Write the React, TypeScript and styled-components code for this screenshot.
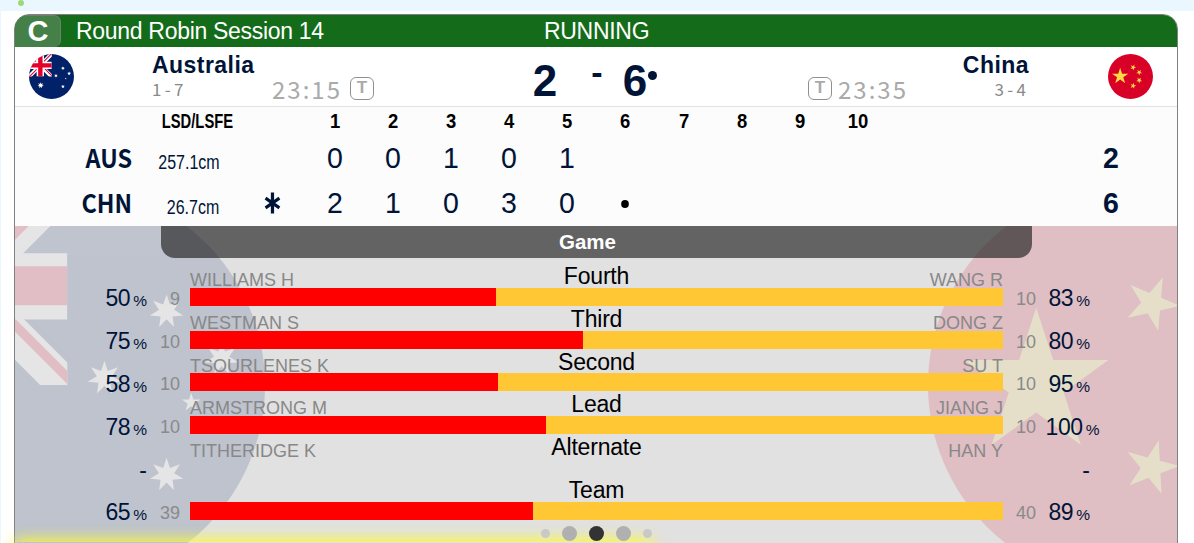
import styled, { createGlobalStyle, css } from 'styled-components';

const GlobalStyle = createGlobalStyle`
  * {
    box-sizing: border-box;
  }
  body {
    margin: 0;
    height: 543px;
    overflow: hidden;
    background: #fff;
    font-family: 'Liberation Sans', Arial, sans-serif;
  }
`;

type StarProps = { cx: number; cy: number; r: number; points?: number; inner?: number; angle?: number };
const Star: React.FC<StarProps & { fill: string }> = ({ cx, cy, r, points = 5, inner = 0.382, angle = -90, fill }) => {
  const coords = Array.from({ length: points * 2 }, (_, i) => {
    const a = ((angle + (i * 180) / points) * Math.PI) / 180;
    const d = i % 2 ? r * inner : r;
    return `${(cx + d * Math.cos(a)).toFixed(1)},${(cy + d * Math.sin(a)).toFixed(1)}`;
  });
  return <polygon points={coords.join(' ')} fill={fill} />;
};

const FlagAus: React.FC<{ id: string }> = ({ id }) => (
  <svg viewBox="0 0 512 512" width="100%" height="100%">
    <clipPath id={`${id}-round`}>
      <circle cx="256" cy="256" r="256" />
    </clipPath>
    <clipPath id={`${id}-canton`}>
      <path d="M0 0h259v256H0z" />
    </clipPath>
    <g clipPath={`url(#${id}-round)`}>
      <path fill="#012169" d="M0 0h512v512H0z" />
      <g clipPath={`url(#${id}-canton)`}>
        <path stroke="#fff" strokeWidth="45" d="M-20-20 280 280M278-20-20 278" />
        <path
          stroke="#e4002b"
          strokeWidth="12"
          d="M129 116.500 280 267.500M129 141.500-20-7.500M124.500 129 273.500-20M133.500 129-20 282.500"
        />
        <path fill="#fff" d="M87 0h84v256H87zM0 87.500h259v84.500H0z" />
        <path fill="#e4002b" d="M104 0h50v256h-50zM0 104h259v50H0z" />
      </g>
      <Star fill="#fff" cx={133} cy={357} r={37} points={7} inner={0.45} />
      <Star fill="#fff" cx={386} cy={162} r={22} points={7} inner={0.45} />
      <Star fill="#fff" cx={306.500} cy={247} r={22} points={7} inner={0.45} />
      <Star fill="#fff" cx={456.500} cy={222} r={22} points={7} inner={0.45} />
      <Star fill="#fff" cx={386} cy={371} r={22} points={7} inner={0.45} />
      <Star fill="#fff" cx={417.500} cy={278.500} r={12.500} />
    </g>
  </svg>
);

const FlagChn: React.FC = () => (
  <svg viewBox="0 0 512 512" width="100%" height="100%">
    <circle cx="256" cy="256" r="256" fill="#d80027" />
    <Star fill="#ffda44" cx={138.500} cy={254} r={97} />
    <Star fill="#ffda44" cx={286.500} cy={151.500} r={36} angle={5} />
    <Star fill="#ffda44" cx={355} cy={209} r={36} angle={162} />
    <Star fill="#ffda44" cx={355} cy={299} r={36} angle={18} />
    <Star fill="#ffda44" cx={286} cy={361.500} r={36} angle={-3} />
  </svg>
);

type Player = { position: string; home: string; away: string; homePct?: number; awayPct?: number; homeN?: number; awayN?: number };
const players: Player[] = [
  { position: 'Fourth', home: 'WILLIAMS H', away: 'WANG R', homePct: 50, awayPct: 83, homeN: 9, awayN: 10 },
  { position: 'Third', home: 'WESTMAN S', away: 'DONG Z', homePct: 75, awayPct: 80, homeN: 10, awayN: 10 },
  { position: 'Second', home: 'TSOURLENES K', away: 'SU T', homePct: 58, awayPct: 95, homeN: 10, awayN: 10 },
  { position: 'Lead', home: 'ARMSTRONG M', away: 'JIANG J', homePct: 78, awayPct: 100, homeN: 10, awayN: 10 },
  { position: 'Alternate', home: 'TITHERIDGE K', away: 'HAN Y' },
  { position: 'Team', home: '', away: '', homePct: 65, awayPct: 89, homeN: 39, awayN: 40 },
];

const ends = [1, 2, 3, 4, 5, 6, 7, 8, 9, 10];
const teams = [
  { code: 'AUS', lsd: '257.1cm', hammer: false, scores: ['0', '0', '1', '0', '1'], total: 2 },
  { code: 'CHN', lsd: '26.7cm', hammer: true, scores: ['2', '1', '0', '3', '0', 'dot'], total: 6 },
];

const Percent: React.FC<{ value?: number }> = ({ value }) =>
  value === undefined ? (
    <NoValue>-</NoValue>
  ) : (
    <>
      {value}
      <PercentSign>%</PercentSign>
    </>
  );

const App: React.FC = () => (
  <>
    <GlobalStyle />
    <TopStrip>
      <StatusDot />
    </TopStrip>

    <Page>
      <Card>
        <CardHeader>
          <Sheet>C</Sheet>
          <Session>Round Robin Session 14</Session>
          <GameState>RUNNING</GameState>
        </CardHeader>

        <Teams>
          <FlagIcon>
            <FlagAus id="small" />
          </FlagIcon>
          <TeamInfo>
            <TeamName>Australia</TeamName>
            <Record>1 - 7</Record>
          </TeamInfo>
          <Clock>
            23:15 <Timeout>T</Timeout>
          </Clock>
          <Score>
            <Points>2</Points>
            <ScoreDash>-</ScoreDash>
            <Points>6</Points>
            <HammerDot />
          </Score>
          <Clock right>
            <Timeout>T</Timeout> 23:35
          </Clock>
          <TeamInfo right>
            <TeamName>China</TeamName>
            <Record right>3 - 4</Record>
          </TeamInfo>
          <FlagIcon>
            <FlagChn />
          </FlagIcon>
        </Teams>

        <ScoreTable>
          <TableHead>
            <span />
            <HeadLsd>
              <span>LSD/LSFE</span>
            </HeadLsd>
            <span />
            {ends.map(end => (
              <HeadEnd key={end}>{end}</HeadEnd>
            ))}
          </TableHead>
          {teams.map(team => (
            <TableRow key={team.code}>
              <Code>{team.code}</Code>
              <Lsd>
                <span>{team.lsd}</span>
              </Lsd>
              <HammerCell>
                {team.hammer && (
                  <svg width="18" height="22" viewBox="0 0 18 22" stroke={navy} strokeWidth="3.400">
                    <path d="M9 .5v21M1.700 6.200l14.600 9.600M16.300 6.200 1.700 15.800" />
                  </svg>
                )}
              </HammerCell>
              {ends.map((end, i) => (
                <Cell key={end}>{team.scores[i] === 'dot' ? <EndDot /> : team.scores[i]}</Cell>
              ))}
              <Total>{team.total}</Total>
            </TableRow>
          ))}
        </ScoreTable>

        <Stats>
          <BackFlag side="left">
            <FlagAus id="large" />
          </BackFlag>
          <BackFlag side="right">
            <FlagChn />
          </BackFlag>
          <StatsTitle>Game</StatsTitle>
          <StatsList>
            {players.map(p => (
              <StatsRow key={p.position}>
                <Pct>
                  <Percent value={p.homePct} />
                </Pct>
                <Count>{p.homeN}</Count>
                <BarBlock>
                  <BarLabels>
                    <PlayerName>{p.home}</PlayerName>
                    <Position>{p.position}</Position>
                    <PlayerName right>{p.away}</PlayerName>
                  </BarLabels>
                  <Bar empty={p.homePct === undefined}>
                    {p.homePct !== undefined && p.awayPct !== undefined && (
                      <BarFill style={{ width: `${(p.homePct / (p.homePct + p.awayPct)) * 100}%` }} />
                    )}
                  </Bar>
                </BarBlock>
                <Count>{p.awayN}</Count>
                <Pct wide={p.awayPct === 100}>
                  <Percent value={p.awayPct} />
                </Pct>
              </StatsRow>
            ))}
          </StatsList>
          <Pager>
            <PagerDot small />
            <PagerDot />
            <PagerDot active />
            <PagerDot />
            <PagerDot small />
          </Pager>
        </Stats>
      </Card>
      <Glow />
    </Page>
  </>
);

const navy = '#001438';
const tableColumns = '117px 87px 87px repeat(10, 58.100px) 1fr 132px';

const TopStrip = styled.div`
  height: 11px;
  padding-left: 18px;
  overflow: hidden;
  background: #eaf7ff;
`;
const StatusDot = styled.div`
  width: 6px;
  height: 6px;
  border-radius: 50%;
  background: #a0d878;
`;

const Page = styled.div`
  position: relative;
  height: 532px;
  padding: 3px 16px 0 13px;
  overflow: hidden;
  border-left: 1px solid #eaf7ff;
`;
const Card = styled.div`
  height: 600px;
  overflow: hidden;
  border: 1px solid #808080;
  border-radius: 15px;
`;

const CardHeader = styled.div`
  display: grid;
  grid-template-columns: 46px 1fr 1fr;
  grid-template-rows: 32px;
  line-height: 32px;

  color: #fff;
  background: #146c1a;
`;
const Sheet = styled.div`
  padding-left: 1px;
  border: 1px solid #6f7f72;
  border-left: 0;
  border-bottom: 0;
  border-radius: 0 7px 7px 0;
  background: #458048;

  font-size: 29px;
  font-weight: bold;
  line-height: 31px;
  text-align: center;
`;
const Session = styled.div`
  padding-left: 15px;
  font-size: 23px;
  letter-spacing: -0.300px;
`;
const GameState = styled.div`
  margin-left: -75px;
  font-size: 23px;
  letter-spacing: -0.300px;
`;

const Teams = styled.div`
  display: grid;
  grid-template-columns: 45px 115px 1fr 200px 1fr 115px 45px;
  height: 60px;
  padding: 0 24px 0 14px;

  border-bottom: 1px solid #e2e2e2;
  background: #fff;
`;
const FlagIcon = styled.div`
  width: 45px;
  height: 45px;
  margin-top: 7px;
`;
const TeamInfo = styled.div<{ right?: boolean }>`
  width: 180px;
  padding-top: 5px;
  ${({ right }) =>
    right
      ? css`
          justify-self: end;
          padding-right: 79px;
          text-align: right;
        `
      : css`
          padding-left: 78px;
        `}
`;
const TeamName = styled.div`
  font-size: 23px;
  font-weight: bold;
  line-height: 26px;
  letter-spacing: 0.450px;
  color: ${navy};
`;
const Record = styled.div<{ right?: boolean }>`
  padding-right: ${({ right }) => (right ? '3px' : '0')};
  font-family: 'Noto Sans CJK SC', sans-serif;
  font-size: 17px;
  line-height: 21px;
  word-spacing: -0.500px;
  color: #8a8a8a;
  white-space: nowrap;
`;
const Clock = styled.div<{ right?: boolean }>`
  display: flex;
  align-items: center;
  align-self: end;
  justify-content: ${({ right }) => (right ? 'flex-start' : 'flex-end')};
  gap: ${({ right }) => (right ? '6px' : '8px')};
  height: 36px;
  ${({ right }) => (right ? 'padding-left: 117px' : 'padding-right: 117px')};

  font-family: 'Noto Sans CJK SC', sans-serif;
  font-size: 24px;
  letter-spacing: 2px;
  color: #aaa;
  white-space: nowrap;
`;
const Timeout = styled.span`
  display: flex;
  align-items: center;
  justify-content: center;
  flex: none;
  width: 24px;
  height: 23px;

  border: 1px solid #909090;
  border-radius: 6px;

  font-family: 'Liberation Sans', Arial, sans-serif;
  font-size: 17px;
  font-weight: bold;
  letter-spacing: 0;
`;
const Score = styled.div`
  display: flex;
  align-items: flex-start;
  justify-content: center;
  padding: 8px 0 0 8px;
  color: ${navy};
  font-weight: bold;
`;
const Points = styled.span`
  font-size: 44px;
  line-height: 51px;
`;
const ScoreDash = styled.span`
  margin: 0 20px 0 34px;
  font-size: 34px;
  line-height: 34px;
`;
const HammerDot = styled.span`
  width: 9px;
  height: 9px;
  margin: 16px 0 0 1px;
  border-radius: 50%;
  background: ${navy};
`;

const ScoreTable = styled.div`
  height: 119px;
  background: #fcfcfc;
`;
const TableHead = styled.div`
  display: grid;
  grid-template-columns: ${tableColumns};
  height: 29px;

  font-size: 20.500px;
  font-weight: bold;
  line-height: 27px;
  color: #000;
`;
const HeadLsd = styled.div`
  display: flex;
  justify-content: flex-end;
  margin-right: -14px;

  span {
    transform: scaleX(0.72);
    transform-origin: right;
  }
`;
const HeadEnd = styled.div`
  text-align: center;
  transform: scaleX(0.9);
`;
const TableRow = styled.div`
  display: grid;
  grid-template-columns: ${tableColumns};
  grid-template-rows: 45px;
  color: ${navy};
`;
const Code = styled.div`
  font-family: 'Noto Sans CJK SC', 'Noto Sans', sans-serif;
  font-size: 26px;
  font-weight: 700;
  line-height: 42px;
  text-align: right;
  transform: scaleX(0.9);
  transform-origin: right;
`;
const Lsd = styled.div`
  display: flex;
  justify-content: flex-end;
  margin-right: -0.500px;
  font-size: 20.500px;
  line-height: 52px;

  span {
    transform: scaleX(0.78);
    transform-origin: right;
  }
`;
const Cell = styled.div`
  display: flex;
  align-items: center;
  justify-content: center;
  padding-bottom: 1px;
  font-size: 30px;
  transform: scaleX(0.95);
`;
const HammerCell = styled(Cell)`
  padding-left: 20px;
`;
const EndDot = styled.span`
  width: 8.500px;
  height: 8px;
  margin-top: 2px;
  border-radius: 50%;
  background: #000;
`;
const Total = styled.div`
  grid-column: -2;
  font-size: 30px;
  font-weight: bold;
  line-height: 44px;
  text-align: center;
  transform: scaleX(0.95);
`;

const Stats = styled.div`
  position: relative;
  height: 380px;
  overflow: hidden;
  background: #e1e1e1;
`;
const BackFlag = styled.div<{ side: 'left' | 'right' }>`
  position: absolute;
  top: -41.500px;
  ${({ side }) => (side === 'left' ? 'left: -150px' : 'right: -151px')};
  width: 400px;
  height: 400px;
  opacity: 0.15;
`;
const StatsTitle = styled.div`
  position: relative;
  width: 871px;
  height: 32px;
  margin-left: 146px;
  padding-right: 18px;

  border-radius: 0 0 14px 14px;
  background: rgba(30, 30, 30, 0.65);

  color: #fff;
  font-size: 20.500px;
  font-weight: bold;
  line-height: 32px;
  text-align: center;
`;
const StatsList = styled.div`
  position: relative;
  padding-top: 5.280px;
`;
const StatsRow = styled.div`
  display: grid;
  grid-template-columns: 132px 33px 813px 33px 54px;
  height: 42.720px;
  align-items: end;

  > :nth-child(3) {
    margin-left: 10px;
    margin-right: -10px;
  }
  > :nth-child(4) {
    margin-right: -10px;
  }
`;
const Pct = styled.div<{ wide?: boolean }>`
  margin: 0 ${({ wide }) => (wide ? '-19.500px' : '-10px')} -7.500px 0;
  color: ${navy};
  font-size: 23px;
  letter-spacing: -0.400px;
  line-height: 24px;
  text-align: right;
  white-space: nowrap;

  &:first-child {
    margin-right: 0;
  }
`;
const NoValue = styled.div`
  height: 26px;
  letter-spacing: 0;
`;
const PercentSign = styled.span`
  margin-left: 3px;
  font-size: 15.500px;
  letter-spacing: 0;
`;
const Count = styled.div`
  height: 18px;
  margin-bottom: -2px;
  color: #8a8a8a;
  font-size: 18px;
  line-height: 18px;
  text-align: right;
`;
const BarBlock = styled.div``;
const BarLabels = styled.div`
  display: grid;
  grid-template-columns: 1fr 160px 1fr;
  height: 24.720px;
`;
const PlayerName = styled.div<{ right?: boolean }>`
  padding-top: 7px;
  color: #888;
  font-size: 18px;
  line-height: 20px;
  text-align: ${({ right }) => (right ? 'right' : 'left')};
  white-space: nowrap;
`;
const Position = styled.div`
  color: #000;
  font-size: 23px;
  letter-spacing: -0.200px;
  line-height: 27px;
  text-align: center;
`;
const Bar = styled.div<{ empty?: boolean }>`
  height: 18px;
  background: ${({ empty }) => (empty ? 'transparent' : '#ffc733')};
`;
const BarFill = styled.div`
  height: 100%;
  background: #f00;
`;

const Pager = styled.div`
  display: flex;
  position: relative;
  z-index: 2;
  align-items: center;
  justify-content: center;
  gap: 12px;
  margin-top: 6px;
`;
const PagerDot = styled.span<{ small?: boolean; active?: boolean }>`
  width: ${({ small }) => (small ? '9px' : '15px')};
  height: ${({ small }) => (small ? '9px' : '15px')};
  border-radius: 50%;
  background: ${({ small, active }) => (active ? '#333' : small ? '#c9c9c9' : '#b0b0b0')};
`;

/* highlight that shines up from under the bottom edge */
const Glow = styled.div`
  position: absolute;
  top: 531px;
  left: 16px;
  width: 633px;
  height: 40px;
  box-shadow: 0 0 15px 2px #ffff28;
`;

export default App;
